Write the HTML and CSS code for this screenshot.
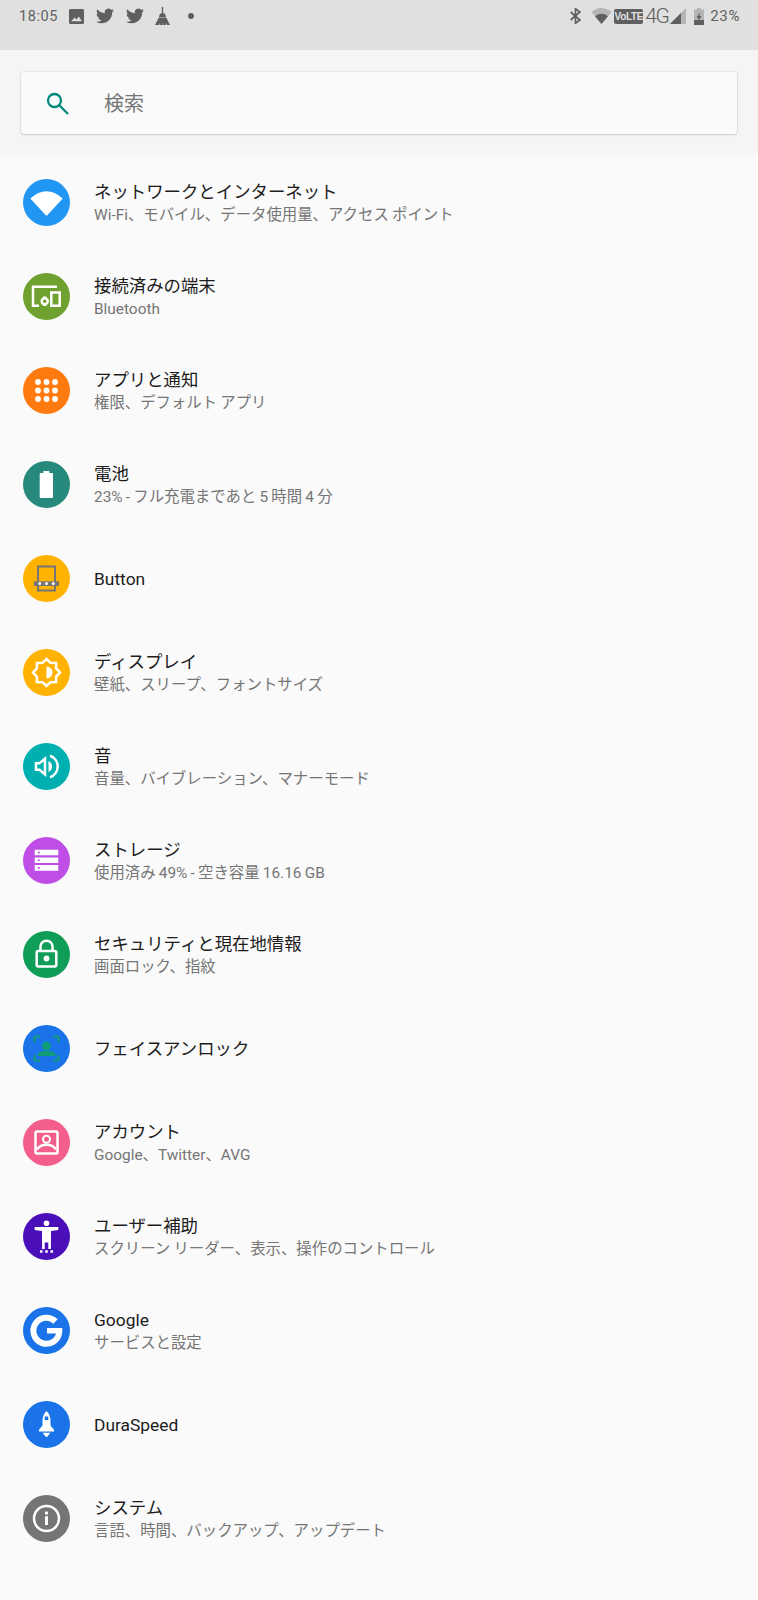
FILE: index.html
```html
<!DOCTYPE html>
<html lang="ja">
<head>
    <meta charset="UTF-8">
    <meta name="viewport" content="width=device-width, initial-scale=1.0">
    <title>設定</title>
    <link rel="stylesheet" href="styles.css">
</head>
<body>

    <header class="status-bar">
        <div class="status-left">
            <span class="clock">18:05</span>
            <svg class="st-image" viewBox="0 0 15 15"><path d="M1.5 0h12A1.5 1.5 0 0 1 15 1.5v12a1.5 1.5 0 0 1-1.500 1.500h-12A1.500 1.500 0 0 1 0 13.500v-12A1.500 1.500 0 0 1 1.500 0zM2.200 12.300h10.600L9.800 7.600 7.400 10.400 5.700 8.600z" fill-rule="evenodd"/></svg>
            <svg class="st-bird" viewBox="0 0 24 24"><path d="M23.953 4.570a10 10 0 0 1-2.825.775 4.958 4.958 0 0 0 2.163-2.723c-.951.555-2.005.959-3.127 1.184a4.920 4.920 0 0 0-8.384 4.482C7.690 8.095 4.067 6.130 1.640 3.162a4.822 4.822 0 0 0-.666 2.475c0 1.710.870 3.213 2.188 4.096a4.904 4.904 0 0 1-2.228-.616v.060a4.923 4.923 0 0 0 3.946 4.827 4.996 4.996 0 0 1-2.212.085 4.936 4.936 0 0 0 4.604 3.417 9.867 9.867 0 0 1-6.102 2.105c-.390 0-.779-.023-1.170-.067a13.995 13.995 0 0 0 7.557 2.209c9.053 0 13.998-7.496 13.998-13.985 0-.210 0-.420-.015-.630A9.935 9.935 0 0 0 24 4.590z"/></svg>
            <svg class="st-bird" viewBox="0 0 24 24"><path d="M23.953 4.570a10 10 0 0 1-2.825.775 4.958 4.958 0 0 0 2.163-2.723c-.951.555-2.005.959-3.127 1.184a4.920 4.920 0 0 0-8.384 4.482C7.690 8.095 4.067 6.130 1.640 3.162a4.822 4.822 0 0 0-.666 2.475c0 1.710.870 3.213 2.188 4.096a4.904 4.904 0 0 1-2.228-.616v.060a4.923 4.923 0 0 0 3.946 4.827 4.996 4.996 0 0 1-2.212.085 4.936 4.936 0 0 0 4.604 3.417 9.867 9.867 0 0 1-6.102 2.105c-.390 0-.779-.023-1.170-.067a13.995 13.995 0 0 0 7.557 2.209c9.053 0 13.998-7.496 13.998-13.985 0-.210 0-.420-.015-.630A9.935 9.935 0 0 0 24 4.590z"/></svg>
            <svg class="st-broom" viewBox="0 0 15 18"><path d="M6.800 0h1.400v6.500H6.800zM5 6.500h5l1 3.500H4zM3.800 10.500h7.400L15 18h-3l-.8-2-.2 2H8.200L8 15.500 7.600 18H4.800l.2-2-1 2H0z"/></svg>
            <span class="st-dot"></span>
        </div>
        <div class="status-right">
            <svg class="st-bt" viewBox="0 0 11 16"><path d="M.6 4l9.300 8-4.400 3.300V.7L9.900 4 .6 12" fill="none" stroke="#5f5f5f" stroke-width="1.700"/></svg>
            <svg class="st-wifi" viewBox="0 0 20 16"><path d="M0 4Q10-4 20 4L10 16z" fill="#b5b5b5"/><path d="M3.500 8.300Q10 3.400 16.500 8.300L10 16z"/></svg>
            <span class="volte">VoLTE</span>
            <span class="net">4G</span>
            <svg class="st-signal" viewBox="0 0 16 16"><path d="M16 0v16H0z" fill="#b5b5b5"/><path d="M11 5v11H0l11-11z"/></svg>
            <svg class="st-batt" viewBox="0 0 10 17"><path d="M3 0h4v1.500h3V17H0V1.500h3z" fill="#b5b5b5"/><path d="M0 12h10v5H0z"/><path d="M6 4L2.500 10h2.200L4 14l3.500-6H5.300z" fill="#5f5f5f"/></svg>
            <span class="level">23%</span>
        </div>
    </header>

    <section class="search-wrap">
        <div class="search-card">
            <svg class="search-icon" viewBox="0 0 24 24"><circle cx="9.500" cy="9.500" r="6.500" fill="none" stroke="#00897b" stroke-width="2.300"/><path d="M14.300 14.300L23 23" stroke="#00897b" stroke-width="2.300"/></svg>
            <span class="search-text">検索</span>
        </div>
    </section>

    <main class="settings-list">

        <div class="row">
            <span class="circle c-network">
                <svg viewBox="0 0 47 47"><path class="w" d="M7.300 19.500Q23.500 5.100 39.700 19.500L24.500 36Q23.500 37 22.500 36z"/></svg>
            </span>
            <div class="row-text">
                <div class="title">ネットワークとインターネット</div>
                <div class="sub">Wi-Fi、モバイル、データ使用量、アクセス ポイント</div>
            </div>
        </div>

        <div class="row">
            <span class="circle c-devices">
                <svg viewBox="0 0 47 47">
                    <path class="ws" d="M34 13.700H10V32.700H16"/>
                    <rect class="ws" x="28.300" y="19.500" width="8.400" height="13.200"/>
                    <circle class="ws" cx="21.700" cy="28.300" r="3"/>
                    <path class="w" d="M20 23.500h3.400v2h-3.400zM20 31h3.400v2h-3.400z"/>
                </svg>
            </span>
            <div class="row-text">
                <div class="title">接続済みの端末</div>
                <div class="sub">Bluetooth</div>
            </div>
        </div>

        <div class="row">
            <span class="circle c-apps">
                <svg viewBox="0 0 47 47">
                    <g class="w">
                        <circle cx="15" cy="15" r="2.900"/><circle cx="23.500" cy="15" r="2.900"/><circle cx="32" cy="15" r="2.900"/>
                        <circle cx="15" cy="23.500" r="2.900"/><circle cx="23.500" cy="23.500" r="2.900"/><circle cx="32" cy="23.500" r="2.900"/>
                        <circle cx="15" cy="32" r="2.900"/><circle cx="23.500" cy="32" r="2.900"/><circle cx="32" cy="32" r="2.900"/>
                    </g>
                </svg>
            </span>
            <div class="row-text">
                <div class="title">アプリと通知</div>
                <div class="sub">権限、デフォルト アプリ</div>
            </div>
        </div>

        <div class="row">
            <span class="circle c-battery">
                <svg viewBox="0 0 47 47"><path class="w" d="M20.300 10h6v2H29a1 1 0 0 1 1 1v23a1 1 0 0 1-1 1H17.700a1 1 0 0 1-1-1V13a1 1 0 0 1 1-1h2.600z"/></svg>
            </span>
            <div class="row-text">
                <div class="title">電池</div>
                <div class="sub">23% - フル充電まであと 5 時間 4 分</div>
            </div>
        </div>

        <div class="row">
            <span class="circle c-amber">
                <svg viewBox="0 0 47 47">
                    <rect x="15" y="11.500" width="17" height="24" fill="none" stroke="#757575" stroke-width="2"/>
                    <rect x="11" y="26.300" width="25" height="4.700" fill="#757575"/>
                    <g class="w"><circle cx="16.700" cy="28.600" r="1.500"/><circle cx="23.500" cy="28.600" r="1.500"/><circle cx="30.300" cy="28.600" r="1.500"/></g>
                </svg>
            </span>
            <div class="row-text">
                <div class="title">Button</div>
            </div>
        </div>

        <div class="row">
            <span class="circle c-amber">
                <svg viewBox="0 0 47 47">
                    <polygon class="ws" points="23.500,10 27.520,13.800 33.050,13.950 33.200,19.480 37,23.500 33.200,27.520 33.050,33.050 27.520,33.200 23.500,37 19.480,33.200 13.950,33.050 13.800,27.520 10,23.500 13.800,19.480 13.950,13.950 19.480,13.800"/>
                    <path class="w" d="M23.500 17.500A6 6 0 0 1 23.500 29.500z"/>
                </svg>
            </span>
            <div class="row-text">
                <div class="title">ディスプレイ</div>
                <div class="sub">壁紙、スリープ、フォントサイズ</div>
            </div>
        </div>

        <div class="row">
            <span class="circle c-sound">
                <svg viewBox="0 0 47 47">
                    <path class="ws" d="M13 20.200h3.500l5.500-4.600v15.800l-5.500-4.600H13z"/>
                    <path class="w" d="M25.500 18a6 6 0 0 1 0 11z"/>
                    <path class="ws" d="M27 12.800a11.300 11.300 0 0 1 0 21.400"/>
                </svg>
            </span>
            <div class="row-text">
                <div class="title">音</div>
                <div class="sub">音量、バイブレーション、マナーモード</div>
            </div>
        </div>

        <div class="row">
            <span class="circle c-storage">
                <svg viewBox="0 0 47 47">
                    <path class="w" d="M11.700 12.700h23.600v5.600H11.700zM11.700 20.400h23.600V26H11.700zM11.700 28h23.600v5.700H11.700z"/>
                    <path fill="#bf4ee6" d="M14.800 14.700h2v1.700h-2zM14.800 22.400h2v1.700h-2zM14.800 30h2v1.700h-2z"/>
                </svg>
            </span>
            <div class="row-text">
                <div class="title">ストレージ</div>
                <div class="sub">使用済み 49% - 空き容量 16.16 GB</div>
            </div>
        </div>

        <div class="row">
            <span class="circle c-security">
                <svg viewBox="0 0 47 47">
                    <rect class="ws" x="13.700" y="20" width="19.600" height="15.400" rx="1.500"/>
                    <path class="ws" d="M17.500 20v-4.300a6 6 0 0 1 12 0V20"/>
                    <circle class="w" cx="23.500" cy="27.500" r="2.900"/>
                </svg>
            </span>
            <div class="row-text">
                <div class="title">セキュリティと現在地情報</div>
                <div class="sub">画面ロック、指紋</div>
            </div>
        </div>

        <div class="row">
            <span class="circle c-blue">
                <svg viewBox="0 0 47 47">
                    <path class="face" d="M11.500 17v-4a1.500 1.500 0 0 1 1.500-1.500h4M30 11.500h4a1.500 1.500 0 0 1 1.500 1.500v4M35.500 30v4a1.500 1.500 0 0 1-1.500 1.500h-4M17 35.500h-4a1.500 1.500 0 0 1-1.500-1.500v-4"/>
                    <circle cx="23.500" cy="20.800" r="4.400" fill="#0f9d78"/>
                    <path fill="#0f9d78" d="M14.500 31v-1.500c0-2.500 6-3.800 9-3.800s9 1.300 9 3.800V31z"/>
                </svg>
            </span>
            <div class="row-text">
                <div class="title">フェイスアンロック</div>
            </div>
        </div>

        <div class="row">
            <span class="circle c-account">
                <svg viewBox="0 0 47 47">
                    <rect class="ws" x="12.500" y="12.500" width="22" height="22" rx="1.500"/>
                    <circle class="ws thin" cx="23.500" cy="20.300" r="3.500"/>
                    <path class="ws" d="M14 30.500c2-3 6-4.700 9.500-4.700s7.500 1.700 9.500 4.700"/>
                </svg>
            </span>
            <div class="row-text">
                <div class="title">アカウント</div>
                <div class="sub">Google、Twitter、AVG</div>
            </div>
        </div>

        <div class="row">
            <span class="circle c-access">
                <svg viewBox="0 0 47 47">
                    <g class="w">
                        <circle cx="23.500" cy="10.300" r="2.800"/>
                        <path d="M11.700 14h23.600v3l-7.300 1v11.500h-.1V36h-2.600v-6.500h-3.600V36h-2.600v-6.500h-.1V18l-7.300-1z"/>
                        <path d="M17 37.200h2.600v2.500H17zM22.200 37.200h2.600v2.500h-2.600zM27.400 37.200H30v2.500h-2.600z"/>
                    </g>
                </svg>
            </span>
            <div class="row-text">
                <div class="title">ユーザー補助</div>
                <div class="sub">スクリーン リーダー、表示、操作のコントロール</div>
            </div>
        </div>

        <div class="row">
            <span class="circle c-blue">
                <svg viewBox="0 0 47 47">
                    <path class="g-ring" d="M32.500 14.500A13 13 0 1 0 36.200 26"/>
                    <path class="w" d="M24 21h15.200c.300 1.800.200 3.700-.200 5.500H24z"/>
                </svg>
            </span>
            <div class="row-text">
                <div class="title">Google</div>
                <div class="sub">サービスと設定</div>
            </div>
        </div>

        <div class="row">
            <span class="circle c-blue">
                <svg viewBox="0 0 47 47">
                    <path class="w" d="M23.500 10c2.700 2.500 4 6 4 9.500v5l3.500 4.300v1.700H16v-1.700l3.500-4.300v-5c0-3.500 1.300-7 4-9.500z"/>
                    <path class="w" d="M19.500 31.700h8l-4 4.800z"/>
                    <rect x="21.700" y="15.500" width="3.600" height="3.600" fill="#1a73e8"/>
                </svg>
            </span>
            <div class="row-text">
                <div class="title">DuraSpeed</div>
            </div>
        </div>

        <div class="row">
            <span class="circle c-system">
                <svg viewBox="0 0 47 47">
                    <circle class="ws" cx="23.500" cy="23.500" r="12.500"/>
                    <circle class="w" cx="23.500" cy="18" r="1.700"/>
                    <rect class="w" x="22" y="21.200" width="3" height="8.800"/>
                </svg>
            </span>
            <div class="row-text">
                <div class="title">システム</div>
                <div class="sub">言語、時間、バックアップ、アップデート</div>
            </div>
        </div>

    </main>

</body>
</html>
```

FILE: styles.css
```css
body {
    font-family: Roboto, "Noto Sans CJK JP", sans-serif;
    margin: 0;
    padding: 0;
    background-color: #fafafa;
}

svg {
    display: block;
}

/* status bar */
.status-bar {
    height: 50px;
    background-color: #e0e0e0;
    color: #5f5f5f;
    display: flex;
    justify-content: space-between;
    align-items: flex-start;
    padding: 8px 18px 0 19px;
    box-sizing: border-box;
}

.status-bar svg {
    fill: #5f5f5f;
}

.status-left,
.status-right {
    display: flex;
    align-items: center;
    height: 16px;
}

.clock {
    font-size: 14.5px;
    letter-spacing: 0.6px;
    width: 50px;
}

.st-image {
    width: 15px;
    height: 15px;
    margin-right: 12px;
}

.st-bird {
    width: 18px;
    height: 18px;
    margin-right: 11.500px;
}

.st-broom {
    width: 15px;
    height: 18px;
    margin-right: 18px;
}

.st-dot {
    width: 6px;
    height: 6px;
    border-radius: 50%;
    background-color: #5f5f5f;
}

.st-bt {
    width: 11px;
    height: 16px;
    margin-right: 10px;
}

.st-wifi {
    width: 21px;
    height: 16px;
    margin-right: 2px;
}

.volte {
    background-color: #5f5f5f;
    color: #e0e0e0;
    font-family: "Liberation Sans", sans-serif;
    font-size: 10px;
    font-weight: bold;
    line-height: 15px;
    width: 29px;
    text-align: center;
    border-radius: 2px;
    letter-spacing: -0.300px;
}

.net {
    font-size: 21px;
    font-weight: 300;
    width: 25px;
    margin-left: 2px;
    letter-spacing: -1.500px;
}

.st-signal {
    width: 16px;
    height: 16px;
    margin-right: 8px;
}

.st-batt {
    width: 10px;
    height: 17px;
    margin-right: 6px;
}

.level {
    font-size: 15px;
    letter-spacing: 0.600px;
}

/* search */
.search-wrap {
    background-color: #f5f5f5;
    height: 105px;
    padding: 22px 21px 0;
    box-sizing: border-box;
}

.search-card {
    height: 62px;
    background-color: #fafafa;
    border-radius: 3px;
    box-shadow: 0 0 2px rgba(0, 0, 0, 0.2), 0 1px 2px rgba(0, 0, 0, 0.12);
    display: flex;
    align-items: center;
}

.search-icon {
    width: 24px;
    height: 24px;
    margin-left: 24px;
    margin-right: 35px;
}

.search-text {
    font-size: 20px;
    color: #757575;
    padding-bottom: 2px;
}

/* list */
.row {
    height: 94px;
    display: flex;
    align-items: center;
    padding-left: 23px;
}

.circle {
    width: 47px;
    height: 47px;
    border-radius: 50%;
    margin-right: 24px;
    flex-shrink: 0;
}

.row-text {
    padding-top: 2px;
}

.title {
    font-size: 17.400px;
    line-height: 24px;
    color: #1c1c1c;
}

.sub {
    font-size: 15.400px;
    line-height: 23px;
    color: #757575;
    word-spacing: -0.600px;
}

.w {
    fill: #ffffff;
}

.ws {
    fill: none;
    stroke: #ffffff;
    stroke-width: 2.500px;
}

.ws.thin {
    stroke-width: 2px;
}

.face {
    fill: none;
    stroke: #0f9d78;
    stroke-width: 2.200px;
}

.g-ring {
    fill: none;
    stroke: #ffffff;
    stroke-width: 6px;
}

.c-network { background-color: #2196f3; }
.c-devices { background-color: #6ea12f; }
.c-apps { background-color: #ff7b0f; }
.c-battery { background-color: #26897c; }
.c-amber { background-color: #ffb300; }
.c-sound { background-color: #00b0b0; }
.c-storage { background-color: #bf4ee6; }
.c-security { background-color: #0f9d58; }
.c-blue { background-color: #1a73e8; }
.c-account { background-color: #f45e8c; }
.c-access { background-color: #4a0fb8; }
.c-system { background-color: #757575; }
```
